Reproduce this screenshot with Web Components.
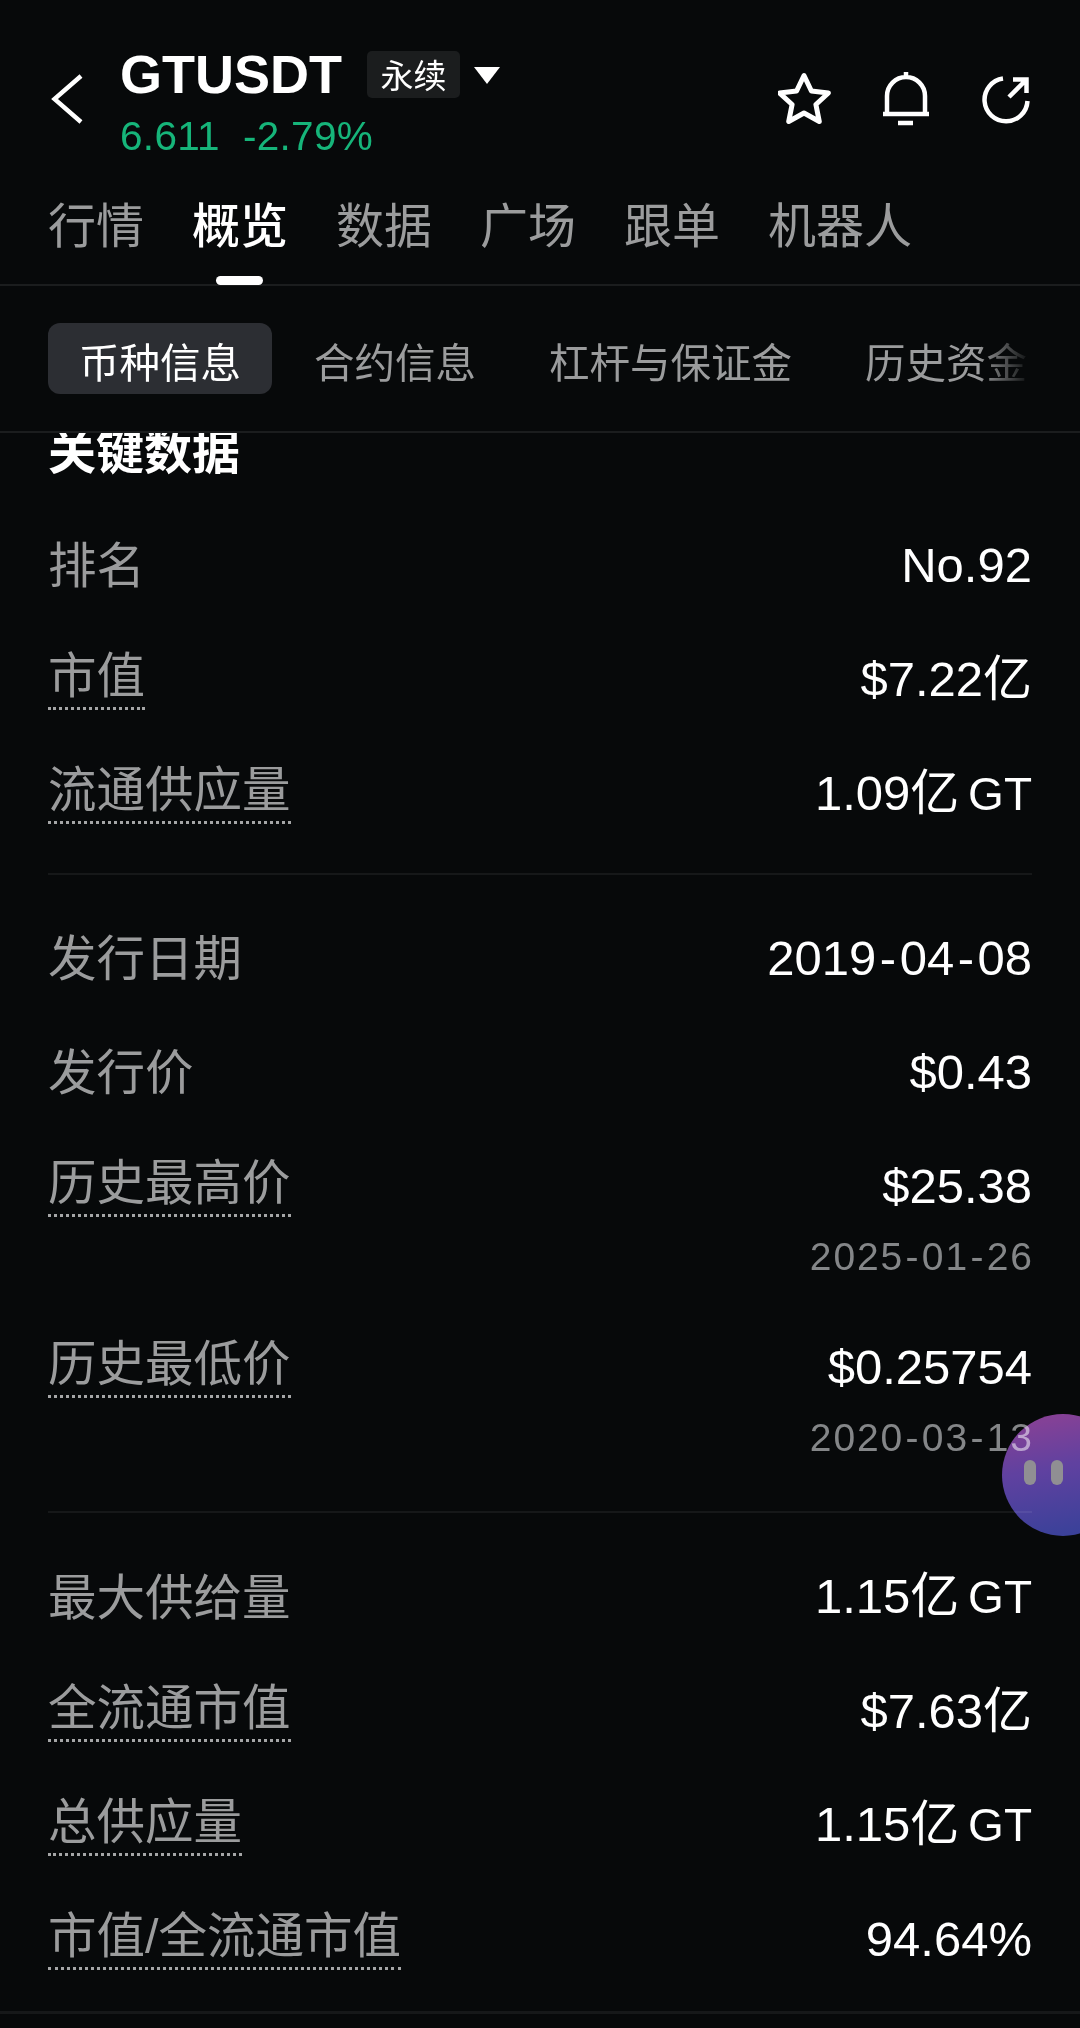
<!DOCTYPE html>
<html lang="zh">
<head>
<meta charset="utf-8">
<title>GTUSDT</title>
<style>
    html, body {
        margin: 0;
        padding: 0;
        background: #07090a;
    }
    body {
        width: 1080px;
        height: 2028px;
        overflow: hidden;
        font-family: "Liberation Sans", "Noto Sans CJK SC", sans-serif;
    }
</style>
</head>
<body>
<gt-app>
    <gt-header slot="header" symbol="GTUSDT" kind="永续" price="6.611" change="-2.79%"></gt-header>
    <gt-main-tabs slot="header" active="概览" items="行情,概览,数据,广场,跟单,机器人"></gt-main-tabs>
    <gt-sub-tabs slot="header" active="币种信息" items="币种信息,合约信息,杠杆与保证金,历史资金"></gt-sub-tabs>

    <gt-heading>关键数据</gt-heading>
    <gt-row label="排名" value="No.92"></gt-row>
    <gt-row label="市值" value="$7.22亿" dotted></gt-row>
    <gt-row label="流通供应量" value="1.09亿 GT" dotted></gt-row>
    <gt-divider top="23" bottom="26"></gt-divider>
    <gt-row label="发行日期" value="2019-04-08"></gt-row>
    <gt-row label="发行价" value="$0.43"></gt-row>
    <gt-row label="历史最高价" value="$25.38" date="2025-01-26" dotted></gt-row>
    <gt-row label="历史最低价" value="$0.25754" date="2020-03-13" dotted></gt-row>
    <gt-divider top="21" bottom="26.500"></gt-divider>
    <gt-row label="最大供给量" value="1.15亿 GT"></gt-row>
    <gt-row label="全流通市值" value="$7.63亿" dotted></gt-row>
    <gt-row label="总供应量" value="1.15亿 GT" dotted></gt-row>
    <gt-row label="市值/全流通市值" value="94.64%" dotted></gt-row>
    <gt-divider thick top="15" bottom="0"></gt-divider>
</gt-app>
<gt-bubble></gt-bubble>

<script>
(() => {
    const FONT = `"Liberation Sans", "Noto Sans CJK SC", sans-serif`

    const define = (name, render) => {
        customElements.define(name, class extends HTMLElement {
            constructor(){
                super()
                this.root = this.attachShadow({mode: 'open'})
            }
            connectedCallback(){
                this.root.innerHTML = render(this)
            }
        })
    }

    // les tirets des dates sont plus larges que ceux de la police
    const dashes = text => text.replace(/-/g, `<span class="dash">-</span>`)
    const amount = text => dashes(text).replace(" GT", `<span class="unit"> GT</span>`)

    define("gt-app", () => `
        <style>
            :host { display: flex; flex-direction: column; width: 1080px; height: 2028px; overflow: hidden; color: #fff; font-family: ${FONT}; }
            .body { display: block; flex: 1; overflow: hidden; padding: 0 48px; }
        </style>
        <slot name="header"></slot>
        <div class="body"><slot></slot></div>
    `)

    define("gt-header", el => `
        <style>
            :host { display: flex; height: 172px; box-sizing: border-box; padding: 43px 46px 0 51px; }
            .back { width: 32px; height: 52px; margin: 30px 37px 0 0; flex: none; }
            .info { flex: 1; }
            .top { display: flex; align-items: center; height: 62px; }
            .symbol { font-size: 54px; font-weight: 700; line-height: 62px; }
            .kind { margin-left: 25px; width: 93px; height: 47px; display: flex; align-items: center; justify-content: center; background: #1b1d1e; border-radius: 5px; font-size: 33px; }
            .caret { margin-left: 14px; width: 26px; height: 18px; margin-top: 2px; }
            .price { margin-top: 9px; color: #16b57a; font-size: 40.500px; letter-spacing: .3px; line-height: 44px; white-space: pre; }
            .actions { display: flex; gap: 44px; margin-top: 27px; height: 56px; }
            svg { display: block; flex: none; }
        </style>
        <svg class="back" viewBox="0 0 32 52" fill="none" stroke="#fff" stroke-width="4.400"><path d="M30 3 3.500 26 30 49"/></svg>
        <div class="info">
            <div class="top">
                <span class="symbol">${el.getAttribute("symbol")}</span>
                <span class="kind">${el.getAttribute("kind")}</span>
                <svg class="caret" viewBox="0 0 26 18" fill="#fff"><path d="M0 1h26L13 18z"/></svg>
            </div>
            <div class="price">${el.getAttribute("price")}  ${el.getAttribute("change")}</div>
        </div>
        <div class="actions">
            <svg width="56" height="56" viewBox="2 0 56 56" fill="none" stroke="#fff" stroke-width="5" stroke-linejoin="round"><path d="M28 5.500l7.400 15.500 17 2-12.500 11.500 3.400 17L28 43 12.700 51.500l3.400-17L3.600 23l17-2z"/></svg>
            <svg width="56" height="56" viewBox="0 0 56 56" fill="none" stroke="#fff" stroke-width="4.500"><path d="M5 44h46M9 44V26a19 19 0 0 1 38 0v18M28 2v5M20 53h15"/></svg>
            <svg width="56" height="56" viewBox="0 0 56 56" fill="none" stroke="#fff" stroke-width="4.500"><path d="M25 8.500A21.500 21.500 0 1 0 49.500 31M31 27 47 11M35 9.500h13.500V23"/></svg>
        </div>
    `)

    define("gt-main-tabs", el => {
        let active = el.getAttribute("active")
        let tabs = el.getAttribute("items").split(",").map(t => `<span class="tab ${t == active ? "on" : ""}">${t}</span>`).join("")
        return `
            <style>
                :host { display: flex; gap: 48px; height: 114px; box-sizing: border-box; padding: 0 48px; border-bottom: 2px solid #1b1d1e; }
                .tab { position: relative; font-size: 48px; line-height: 60px; margin-top: 25px; height: 60px; color: #9b9c9d; }
                .on { color: #fff; font-weight: 500; }
                .on::after { content: ""; position: absolute; left: 50%; bottom: -28px; width: 47px; height: 9px; margin-left: -24px; border-radius: 5px; background: #fff; }
            </style>
            ${tabs}
        `
    })

    define("gt-sub-tabs", el => {
        let active = el.getAttribute("active")
        let tabs = el.getAttribute("items").split(",").map(t => `<span class="tab ${t == active ? "on" : ""}">${t}</span>`).join("")
        return `
            <style>
                :host { display: block; height: 147px; box-sizing: border-box; padding: 37px 0 0 48px; border-bottom: 2px solid #1b1d1e; }
                .scroll { display: flex; gap: 11px; width: 988px; -webkit-mask-image: linear-gradient(to right, #000 930px, transparent 984px); mask-image: linear-gradient(to right, #000 930px, transparent 984px); }
                .tab { flex: none; height: 71px; line-height: 83px; padding: 0 31px; font-size: 40.500px; color: #9b9c9d; white-space: nowrap; border-radius: 12px; }
                .tab:last-child { padding-right: 0; }
                .on { color: #fff; background: #2c2e33; }
            </style>
            <div class="scroll">${tabs}</div>
        `
    })

    // le titre passe en partie sous la barre d'onglets, comme une liste déjà défilée
    define("gt-heading", () => `
        <style>
            :host { display: block; height: 79px; margin-top: -4px; line-height: 48px; font-size: 48px; font-weight: 700; color: #fff; }
        </style>
        <slot></slot>
    `)

    define("gt-row", el => {
        let date = el.getAttribute("date")
        return `
            <style>
                :host { display: block; padding-bottom: ${date ? 66.5 : 0}px; position: relative; }
                .line { display: flex; justify-content: space-between; align-items: center; height: 114px; }
                .label { font-size: 48.500px; line-height: 60px; color: #9b9c9d; padding-top: 2px; }
                .dotted { margin-top: -3px; border-bottom: 3px dotted #a5a6a7; padding-top: 1px; padding-bottom: 1px; }
                .value { font-size: 49px; line-height: 60px; color: #fff; }
                .value .dash { padding: 0 3.500px; }
                .value .unit { font-size: 46px; word-spacing: -4px; }
                .date { position: absolute; right: -1.900px; top: 106px; font-size: 39px; letter-spacing: 1.900px; line-height: 44px; color: #848688; }
                .date .dash { padding: 0 1.400px; }
            </style>
            <div class="line">
                <span class="label ${el.hasAttribute("dotted") ? "dotted" : ""}">${el.getAttribute("label")}</span>
                <span class="value">${amount(el.getAttribute("value"))}</span>
            </div>
            ${date ? `<div class="date">${dashes(date)}</div>` : ""}
        `
    })

    define("gt-divider", el => {
        let thick = el.hasAttribute("thick")
        return `
            <style>
                :host { display: block; margin: ${el.getAttribute("top")}px ${thick ? -48 : 0}px ${el.getAttribute("bottom")}px; height: ${thick ? 3 : 2}px; background: #161819; }
            </style>
        `
    })

    // le disque se mélange au texte qu'il recouvre, les barres restent au-dessus
    define("gt-bubble", () => `
        <style>
            :host { position: absolute; left: 1002px; top: 1414px; width: 122px; height: 122px; display: flex; gap: 15px; padding: 46px 0 0 22px; box-sizing: border-box; }
            .disc { position: absolute; inset: 0; border-radius: 50%; background: linear-gradient(170deg, #8a3a90 0%, #5a3a9c 45%, #2f3a94 100%); mix-blend-mode: screen; }
            i { position: relative; display: block; width: 12px; height: 25px; border-radius: 6px; background: #908f93; }
        </style>
        <div class="disc"></div>
        <i></i><i></i>
    `)
})()
</script>
</body>
</html>
